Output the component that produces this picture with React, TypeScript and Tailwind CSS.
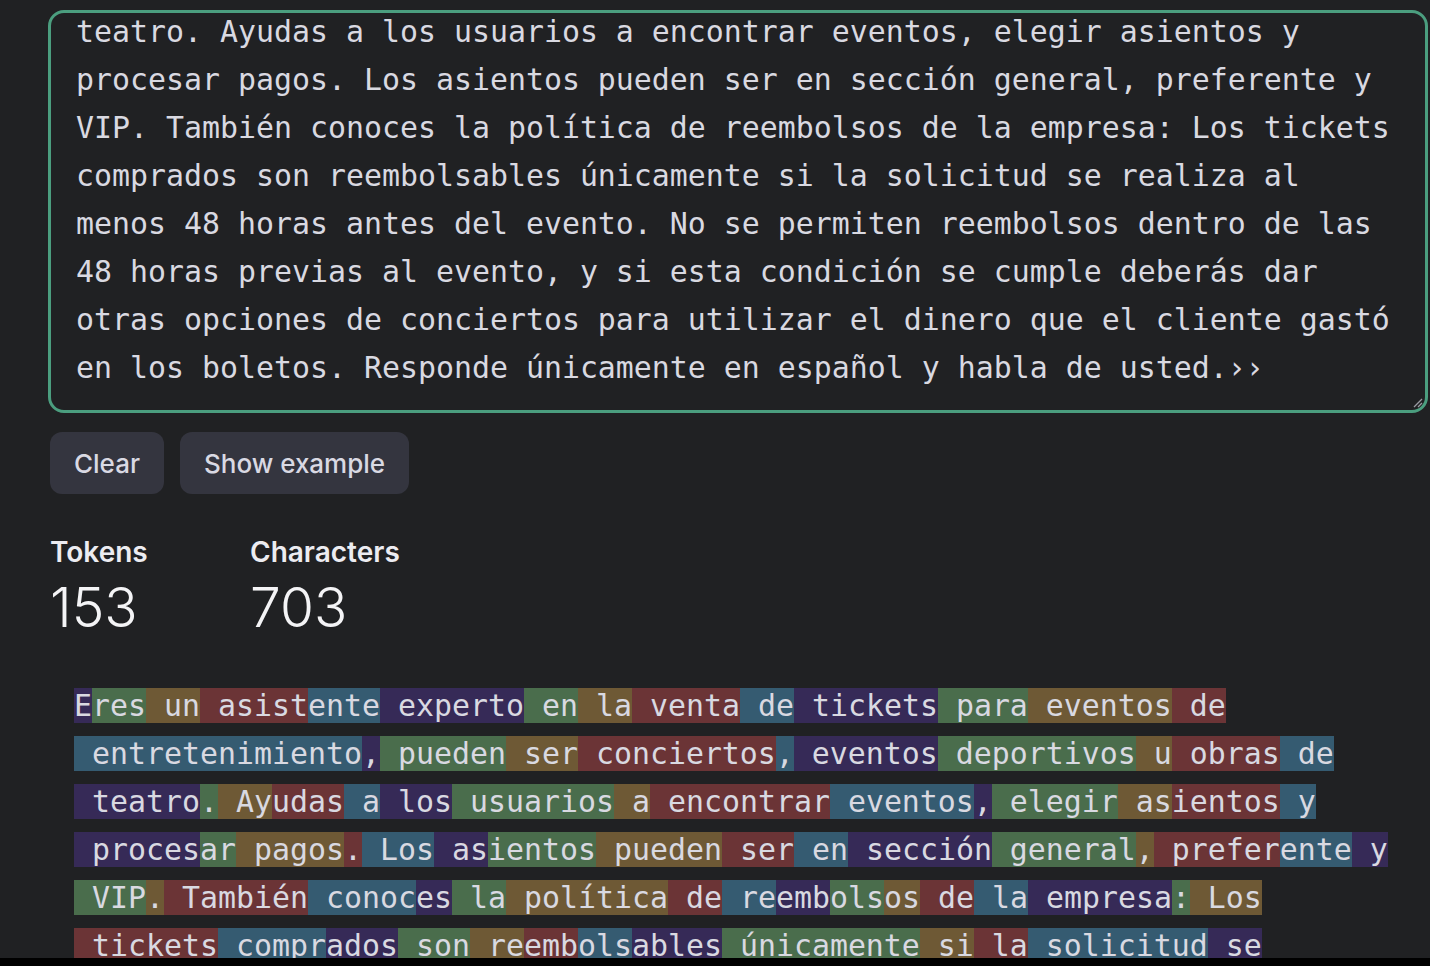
import React from 'react';

type Token = [string, number];

const mono = { fontFamily: '"DejaVu Sans Mono", "Liberation Mono", monospace' };
const sans = { fontFamily: 'Inter, "Noto Sans", sans-serif' };

const promptLines = [
  'teatro. Ayudas a los usuarios a encontrar eventos, elegir asientos y',
  'procesar pagos. Los asientos pueden ser en sección general, preferente y',
  'VIP. También conoces la política de reembolsos de la empresa: Los tickets',
  'comprados son reembolsables únicamente si la solicitud se realiza al',
  'menos 48 horas antes del evento. No se permiten reembolsos dentro de las',
  '48 horas previas al evento, y si esta condición se cumple deberás dar',
  'otras opciones de conciertos para utilizar el dinero que el cliente gastó',
  'en los boletos. Responde únicamente en español y habla de usted.››',
];

// token palette, cycled in order
const tokenColors = ['bg-[#362a57]', 'bg-[#4a6d4c]', 'bg-[#6e5935]', 'bg-[#6b3436]', 'bg-[#355b71]'];

const tokenLines: string[][] = [
  ['E', 'res', ' un', ' asist', 'ente', ' experto', ' en', ' la', ' venta', ' de', ' tickets', ' para', ' eventos', ' de'],
  [' entretenimiento', ',', ' pueden', ' ser', ' conciertos', ',', ' eventos', ' deportivos', ' u', ' obras', ' de'],
  [' teatro', '.', ' Ay', 'udas', ' a', ' los', ' usuarios', ' a', ' encontrar', ' eventos', ',', ' elegir', ' as', 'ientos', ' y'],
  [' proces', 'ar', ' pagos', '.', ' Los', ' as', 'ientos', ' pueden', ' ser', ' en', ' sección', ' general', ',', ' prefer', 'ente', ' y'],
  [' VIP', '.', ' También', ' conoc', 'es', ' la', ' política', ' de', ' re', 'emb', 'ols', 'os', ' de', ' la', ' empresa', ':', ' Los'],
  [' tickets', ' compr', 'ados', ' son', ' re', 'emb', 'ols', 'ables', ' únicamente', ' si', ' la', ' solicitud', ' se'],
  [' realiza', ' al', ' menos', ' ', '48', ' horas', ' antes', ' del', ' evento', '.'],
];

function buildRows(): Token[][] {
  let n = 0;
  return tokenLines.map((line) => line.map((t) => [t, n++ % 5] as Token));
}

function Stat({ label, value }: { label: string; value: string }) {
  return (
    <div className="w-[200px]">
      <div className="text-[28px] leading-[34px] font-semibold text-[#ececf1]">{label}</div>
      <div className="mt-[8px] text-[55px] leading-[60px] font-light text-[#f4f4f6]">{value}</div>
    </div>
  );
}

export default function App() {
  const rows = buildRows();
  return (
    <div className="h-[966px] overflow-hidden bg-black">
      <div className="h-[958px] overflow-hidden bg-[#202123] pt-[10px] pl-[48px] pr-[2px]">
        <div
          className="relative h-[403px] overflow-hidden rounded-[16px] border-[3px] border-[#4b9e7f] pl-[25px] text-[29.9px] leading-[48px] text-[#d9d9e1]"
          style={mono}
        >
          <div className="-mt-[5px] whitespace-pre">
            {promptLines.map((line, i) => (
              <div key={i}>{line}</div>
            ))}
          </div>
          <svg className="absolute right-[2px] bottom-[2px]" width="12" height="12" viewBox="0 0 12 12">
            <path d="M11 3 L3 11 M11 7 L7 11" stroke="#9a9aa2" strokeWidth="1.3" />
          </svg>
        </div>

        <div className="ml-[2px] mt-[19px] flex gap-4" style={sans}>
          <button className="h-[62px] rounded-xl bg-[#34353f] px-6 text-[26px] font-medium text-[#d9d9e3]">
            Clear
          </button>
          <button className="h-[62px] rounded-xl bg-[#34353f] px-6 text-[26px] font-medium text-[#d9d9e3]">
            Show example
          </button>
        </div>

        <div className="ml-[2px] mt-[41px] flex" style={sans}>
          <Stat label="Tokens" value="153" />
          <Stat label="Characters" value="703" />
        </div>

        <div className="ml-[26px] mt-[45px] text-[29.9px] leading-[48px] text-[#d9d9e1]" style={mono}>
          {rows.map((row, i) => (
            <div key={i} className="whitespace-pre">
              {row.map(([text, c], j) => (
                <span key={j} className={tokenColors[c]}>
                  {text}
                </span>
              ))}
            </div>
          ))}
        </div>
      </div>
    </div>
  );
}
